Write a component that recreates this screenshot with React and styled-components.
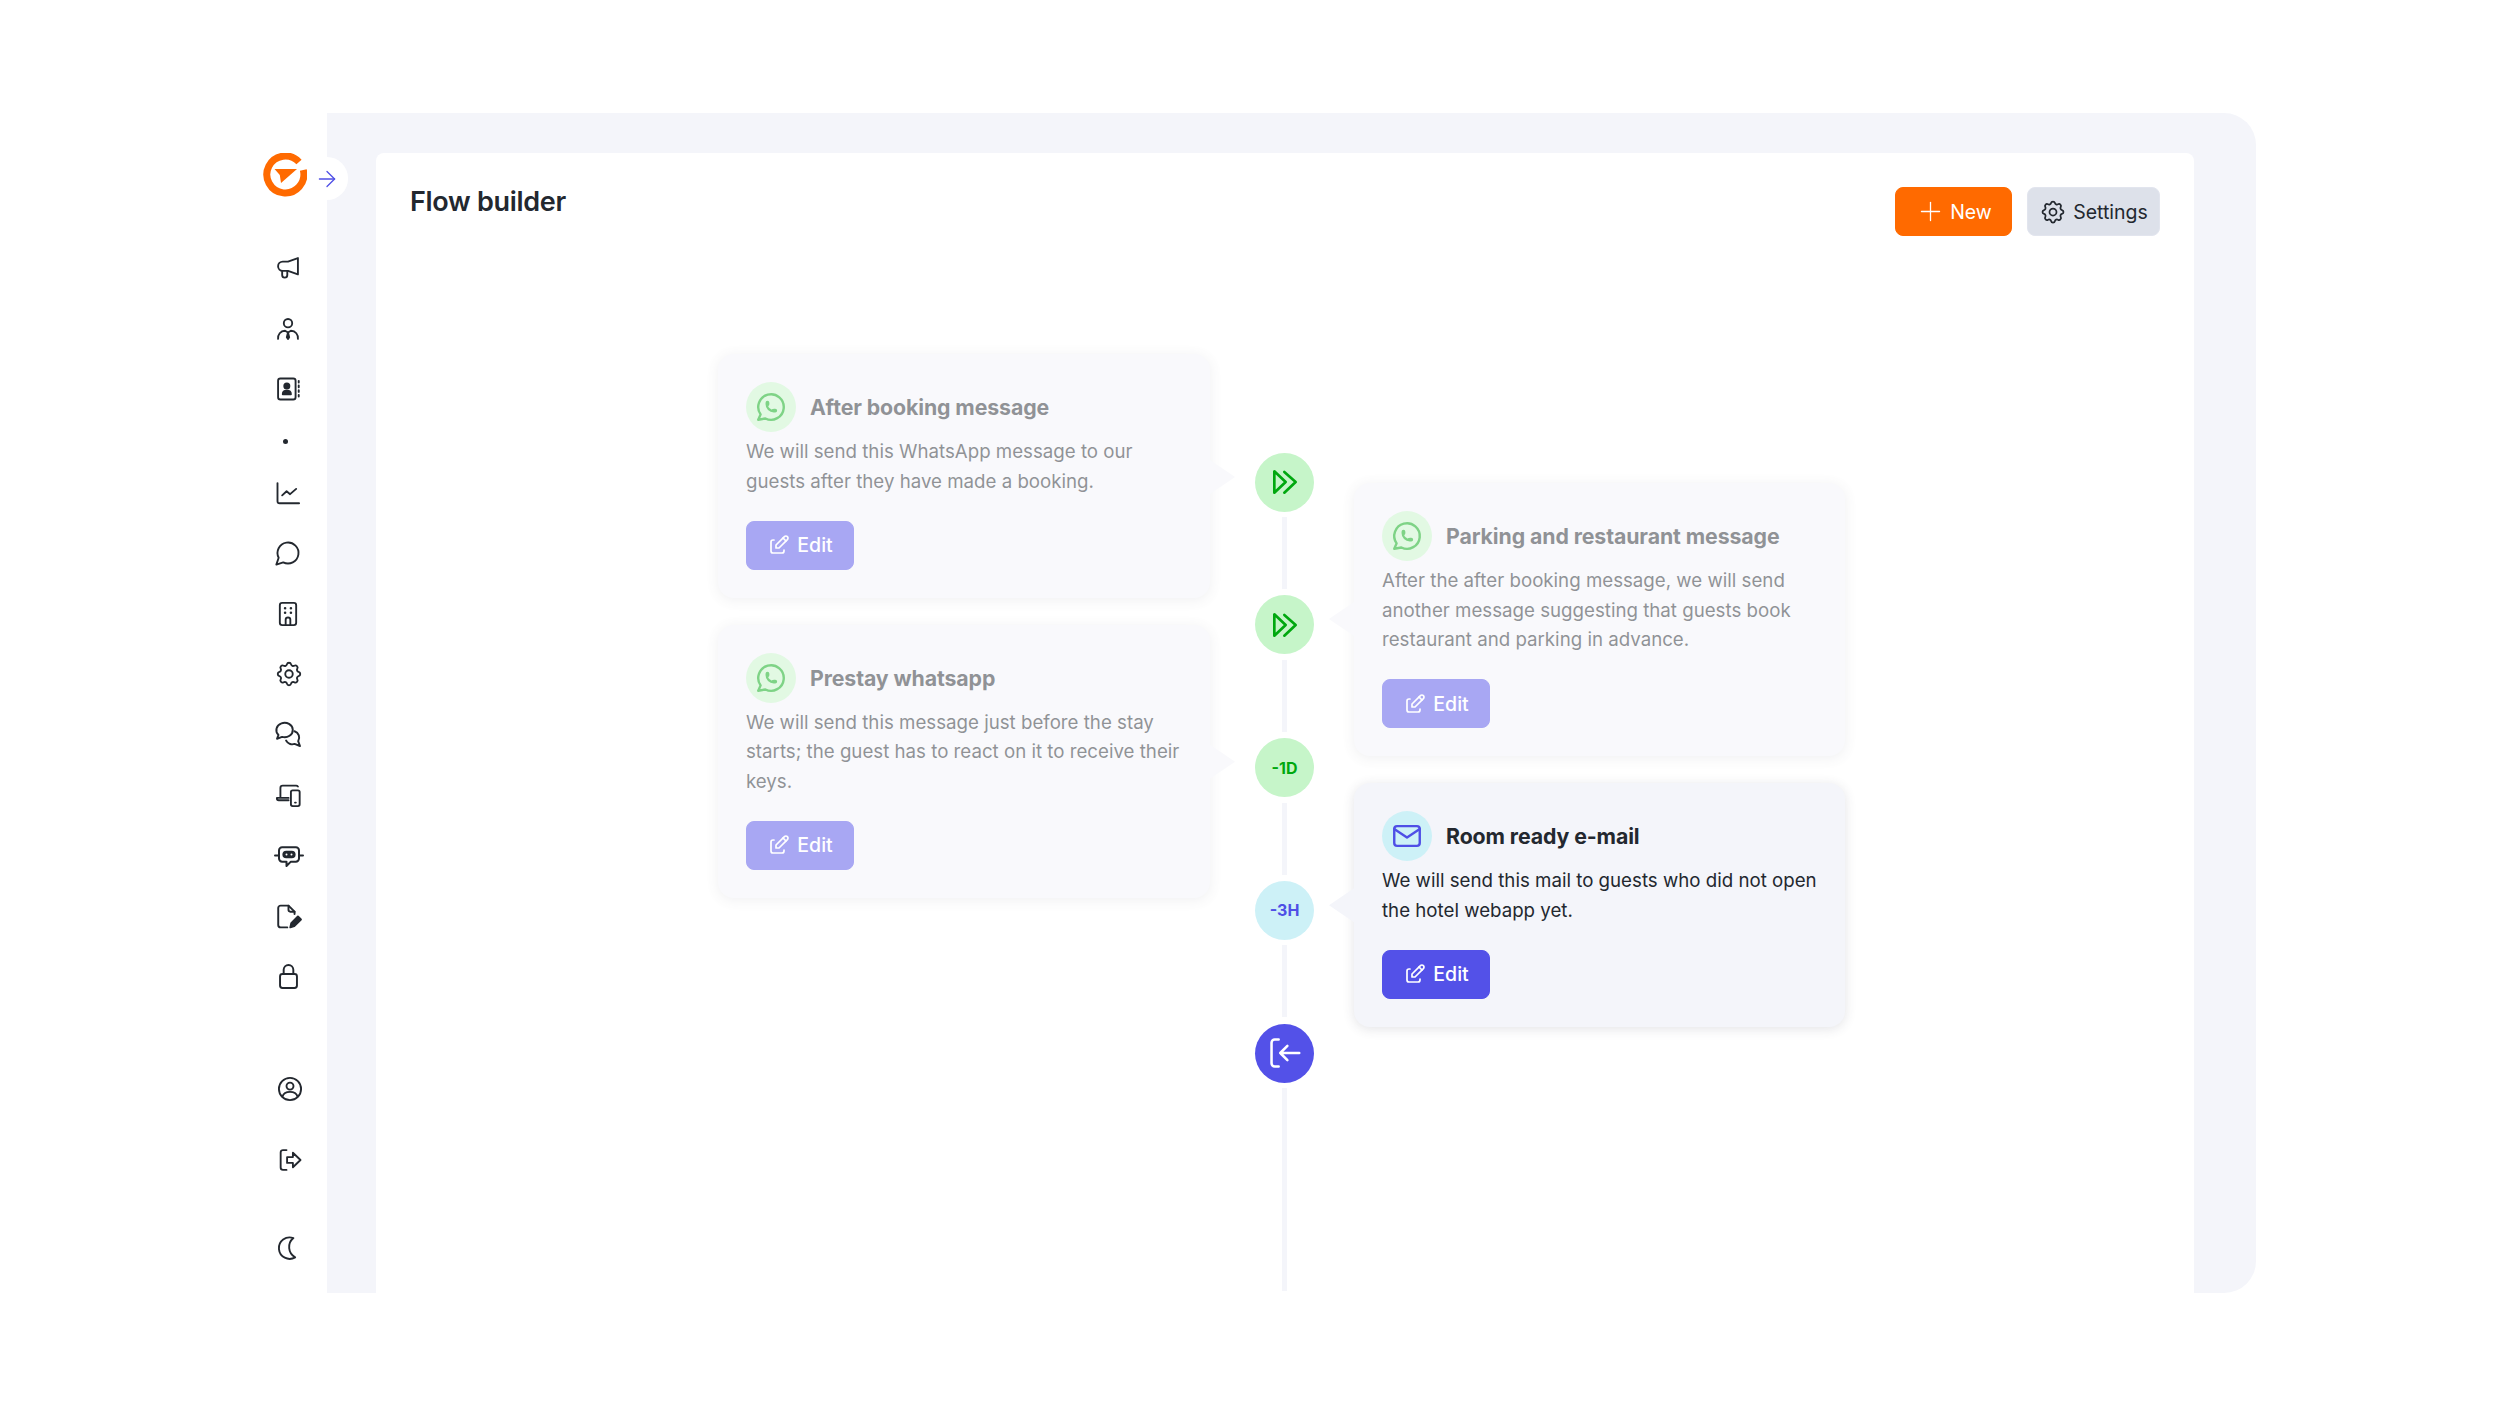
import React from 'react';
import styled, { createGlobalStyle } from 'styled-components';
import { ArrowRight, Plus } from 'lucide-react';
import { TbSettings, TbEdit, TbBrandWhatsapp, TbMail } from 'react-icons/tb';

const Global = createGlobalStyle`
  body {
    margin: 0;
    background: #fff;
    font-family: "Inter", "Liberation Sans", sans-serif;
    color: #23282f;
  }
`;

const Shell = styled.div`
  display: flex;
  width: 2256px;
  height: 1180px;
  margin-top: 113px;
`;

const Sidebar = styled.aside`
  position: relative;
  box-sizing: border-box;
  width: 327px;
  flex: none;
  padding: 40px 0 0 263px;
`;

const Logo = styled.div`
  width: 44px;
  height: 44px;
`;

const Expand = styled.div`
  position: absolute;
  left: 327px;
  top: 44px;
  z-index: 2;
  width: 21px;
  height: 43px;
  background: #fff;
  border-radius: 0 22px 22px 0;
  color: #4f4fe6;
  & svg {
    position: absolute;
    left: -13px;
    top: 8.5px;
  }
`;

const Nav = styled.nav`
  display: flex;
  flex-direction: column;
  margin-top: 40.75px;
`;

const NavItem = styled.div`
  display: flex;
  align-items: center;
  height: 60.5px;
  margin-top: ${p => p.$gap || 0}px;
  margin-left: ${p => p.$shift || 11}px;
  color: #23282f;
`;

const Dot = styled.div`
  width: 5px;
  height: 5px;
  margin: 20px 0 18px 20px;
  border-radius: 50%;
  background: #23282f;
`;

const Panel = styled.main`
  box-sizing: border-box;
  flex: 1;
  padding: 40px 62px 0 49px;
  background: #f4f5fa;
  border-radius: 0 32px 32px 0;
`;

const Board = styled.section`
  box-sizing: border-box;
  height: 100%;
  padding: 34px 34px 0;
  background: #fff;
  border-radius: 8px 8px 0 0;
  overflow: hidden;
`;

const Header = styled.header`
  display: flex;
  justify-content: space-between;
  height: 50px;
`;

const Title = styled.h1`
  margin: 0;
  font-size: 27px;
  line-height: 30px;
  font-weight: 600;
  letter-spacing: -0.3px;
`;

const Actions = styled.div`
  display: flex;
  gap: 15px;
`;

const Button = styled.button`
  display: flex;
  align-items: center;
  justify-content: center;
  gap: ${p => p.$gap || 6}px;
  box-sizing: border-box;
  width: ${p => p.$w}px;
  height: 49px;
  padding: 0;
  border: 1px solid ${p => p.$border || p.$bg};
  border-radius: 8px;
  background: ${p => p.$bg};
  color: ${p => p.$color};
  font: ${p => p.$weight || 500} 19.5px "Inter", sans-serif;
`;

const Flow = styled.div`
  display: grid;
  grid-template-columns: 492px 64px 491px;
  column-gap: 40px;
  margin: 117px 0 0 308px;
`;

const Column = styled.div`
  display: flex;
  flex-direction: column;
  gap: 27px;
  padding-top: ${p => p.$top}px;
`;

const Timeline = styled.div`
  display: flex;
  flex-direction: column;
  align-items: center;
  padding: 98.5px 0 0 5px;
`;

const Node = styled.div`
  display: flex;
  align-items: center;
  justify-content: center;
  width: 59px;
  height: 59px;
  flex: none;
  border-radius: 50%;
  background: ${p => p.$bg};
  color: ${p => p.$color};
  font-size: 16px;
  font-weight: 700;
`;

const Line = styled.div`
  width: 5px;
  height: ${p => p.$h || 72}px;
  margin: 5.5px 0 6.25px;
  flex: none;
  background: #f4f5fa;
`;

const Card = styled.article`
  position: relative;
  box-sizing: border-box;
  padding: 28px;
  background: #f4f5fa;
  border-radius: 16px;
  box-shadow: 0 2px 12px rgba(60, 60, 80, 0.14);
  opacity: ${p => (p.$dim ? 0.5 : 1)};
  &::after {
    content: '';
    position: absolute;
    top: ${p => p.$tail - 17}px;
    ${p => (p.$side === 'right' ? 'left: 100%;' : 'right: 100%;')}
    width: 25px;
    height: 34px;
    background: #f4f5fa;
    clip-path: ${p => (p.$side === 'right'
      ? 'polygon(0 0, 100% 50%, 0 100%)'
      : 'polygon(100% 0, 0 50%, 100% 100%)')};
  }
`;

const CardHead = styled.div`
  display: flex;
  align-items: center;
  gap: 14px;
`;

const Bubble = styled.div`
  display: flex;
  align-items: center;
  justify-content: center;
  width: 50px;
  height: 50px;
  border-radius: 50%;
  background: ${p => p.$bg};
  color: ${p => p.$color};
`;

const CardTitle = styled.h2`
  margin: 0;
  font-size: 21.3px;
  font-weight: 700;
  letter-spacing: -0.1px;
`;

const CardText = styled.p`
  margin: 5px 0 24.5px;
  font-size: 18.7px;
  line-height: 29.6px;
  font-weight: 400;
  white-space: nowrap;
`;

const Svg = ({ children, size = 28 }) => (
  <svg width={size} height={size} viewBox="0 0 24 24" fill="none" stroke="currentColor" strokeWidth="1.6" strokeLinecap="round" strokeLinejoin="round">
    {children}
  </svg>
);

const icons = [
  <Svg><path d="M20.5 3.500v14l-8.500-3H7.500a4 4 0 0 1 0-8H12z" /><path d="M7 14.500V18a2.200 2.200 0 0 0 4.400 0v-3.500" /></Svg>,
  <Svg><circle cx="12" cy="7" r="3.600" /><path d="M3.500 20.500c-.3-3.800 2-6.800 6-7L12 15l2.500-1.500c4 .2 6.300 3.200 6 7" /><path d="M12 15l-1 4 1 1.500 1-1.500z" fill="currentColor" /></Svg>,
  <Svg><rect x="3.500" y="3" width="15" height="18" rx="2" /><circle cx="11" cy="9.500" r="2.200" fill="currentColor" /><path d="M7.500 16.500c0-4 7-4 7 0z" fill="currentColor" /><path d="M21.200 5v1.500M21.200 9v1.500M21.200 13v1.500M21.200 17v1.500" /></Svg>,
  null,
  <Svg><path d="M3 3.500V19a1.800 1.800 0 0 0 1.800 1.800H21.500" /><path d="M7 14l3.800-3.500 3 2.500 5.200-4.500" /></Svg>,
  <Svg><path d="M7.900 20A9 9 0 1 0 4 16.100L2 22Z" /></Svg>,
  <Svg><rect x="5" y="2.500" width="14" height="19" rx="2" /><path d="M9.500 7h.01M14.500 7h.01M9.500 11h.01M14.500 11h.01" strokeWidth="2.200" /><path d="M10 21.500V17a2 2 0 0 1 4 0v4.500" /></Svg>,
  <TbSettings size={30} strokeWidth={1.500} />,
  <Svg size={29}><path d="M2.500 15.500l1.200-3.200A6.800 6 0 1 1 6.700 14z" /><path d="M17 9.300a5.500 5.500 0 0 1 3 8.200l1.500 4-4.500-1.700A6 6 0 0 1 10 17" /></Svg>,
  <Svg><path d="M5.500 13.500V6a2 2 0 0 1 2-2H19a2 2 0 0 1 1.500.700" /><path d="M12.500 16.500H4a1.500 1.500 0 0 1-1.500-1.500v-.500h10" /><rect x="14.500" y="8" width="7.500" height="13.500" rx="1.500" /><path d="M18 18.500h.7" /></Svg>,
  <Svg size={30}>
    <path d="M.8 11.500h3.200M20 11.500h3.200" />
    <path d="M6.500 5h11A2.500 2.500 0 0 1 20 7.500V14a2.500 2.500 0 0 1-2.500 2.500h-4L10 20v-3.500H6.500A2.500 2.500 0 0 1 4 14V7.500A2.500 2.500 0 0 1 6.500 5z" />
    <rect x="7.500" y="8.500" width="9" height="4.500" rx="2.250" fill="currentColor" />
    <circle cx="10" cy="10.750" r=".8" fill="#fff" stroke="none" />
    <circle cx="14" cy="10.750" r=".8" fill="#fff" stroke="none" />
  </Svg>,
  <Svg size={29}><path d="M11 21H5.500a2 2 0 0 1-2-2V5a2 2 0 0 1 2-2H12l5 5v2" /><path d="M12 3v3.500A1.500 1.500 0 0 0 13.500 8H17" /><path d="M13.500 21l.8-3.500 5.500-5.500 2.500 2.500-5.500 5.500z" fill="currentColor" /></Svg>,
  <Svg size={29}><rect x="5" y="10" width="14" height="11.500" rx="2" /><path d="M8 10V6.500a4 4 0 0 1 8 0V10" /></Svg>,
];

const whatsapp = { bg: '#c6f5c9', color: '#00a80f' };
const mail = { bg: '#cdf1f7', color: '#4f4fe6' };

const LeftCards = [
  {
    title: 'After booking message',
    text: <>We will send this WhatsApp message to our<br />guests after they have made a booking.</>,
    tail: 123,
  },
  {
    title: 'Prestay whatsapp',
    text: <>We will send this message just before the stay<br />starts; the guest has to react on it to receive their<br />keys.</>,
    tail: 137,
  },
];

const RightCards = [
  {
    title: 'Parking and restaurant message',
    text: <>After the after booking message, we will send<br />another message suggesting that guests book<br />restaurant and parking in advance.</>,
    tail: 136,
    dim: true,
  },
  {
    title: 'Room ready e-mail',
    text: <>We will send this mail to guests who did not open<br />the hotel webapp yet.</>,
    tail: 122,
    kind: 'mail',
  },
];

const FlowCard = ({ title, text, tail, side, dim, kind }) => (
  <Card $dim={dim} $tail={tail} $side={side}>
    <CardHead>
      {kind === 'mail'
        ? <Bubble $bg={mail.bg} $color={mail.color}><TbMail size={34} strokeWidth={1.700} /></Bubble>
        : <Bubble $bg={whatsapp.bg} $color={whatsapp.color}><TbBrandWhatsapp size={34} strokeWidth={1.700} /></Bubble>}
      <CardTitle>{title}</CardTitle>
    </CardHead>
    <CardText>{text}</CardText>
    <Button $w={108} $bg="#5351e8" $color="#fff">
      <TbEdit size={24} strokeWidth={1.700} /> Edit
    </Button>
  </Card>
);

const Forward = () => (
  <svg width="32" height="32" viewBox="0 0 24 24" fill="none" stroke="currentColor" strokeWidth="2" strokeLinecap="round" strokeLinejoin="round">
    <path d="M4 4v16l8.500-8z" />
    <path d="M11.500 4.500L20 12l-8.500 8" />
  </svg>
);

const App = () => (
  <>
    <Global />
    <Shell>
      <Sidebar>
        <Logo>
          <svg width="44" height="44" viewBox="0 0 44 44" fill="none">
            <path d="M36 9A18.500 18.500 0 1 0 40.300 17" stroke="#ff6a00" strokeWidth="7" />
            <path d="M11.500 16H34L18 30l-1.200-8z" fill="#ff6a00" />
          </svg>
        </Logo>
        <Expand><ArrowRight size={26} strokeWidth={1.200} /></Expand>
        <Nav>
          {icons.map((icon, i) => (icon
            ? <NavItem key={i}>{icon}</NavItem>
            : <Dot key={i} />))}
          <NavItem $gap={51.5} $shift={13}>
            <Svg><circle cx="12" cy="12" r="9.500" /><circle cx="12" cy="9.500" r="3" /><path d="M5.500 18.500c1-3 3.500-4 6.500-4s5.500 1 6.500 4" /></Svg>
          </NavItem>
          <NavItem $gap={10.5} $shift={13}>
            <Svg><path d="M9 3.500H6a2 2 0 0 0-2 2v13a2 2 0 0 0 2 2h3" /><path d="M9.500 9.500h5V5.800L21 12l-6.500 6.200v-3.700h-5z" /></Svg>
          </NavItem>
          <NavItem $gap={27.5} $shift={10}>
            <Svg><path d="M17.500 3.500A9.200 9.200 0 1 0 19 20a10 10 0 0 1-1.500-16.500z" /></Svg>
          </NavItem>
        </Nav>
      </Sidebar>
      <Panel>
        <Board>
          <Header>
            <Title>Flow builder</Title>
            <Actions>
              <Button $w={117} $bg="#ff6a00" $color="#fff" $gap={4} $weight={400}>
                <Plus size={31} strokeWidth={1} /> New
              </Button>
              <Button $w={133} $bg="#dde1ea" $border="#e2e5ee" $color="#23282f" $weight={400}>
                <TbSettings size={28} strokeWidth={1.500} /> Settings
              </Button>
            </Actions>
          </Header>
          <Flow>
            <Column $top={0}>
              {LeftCards.map(c => <FlowCard key={c.title} {...c} side="right" dim />)}
            </Column>
            <Timeline>
              <Node $bg={whatsapp.bg} $color={whatsapp.color}><Forward /></Node>
              <Line />
              <Node $bg={whatsapp.bg} $color={whatsapp.color}><Forward /></Node>
              <Line />
              <Node $bg={whatsapp.bg} $color={whatsapp.color}>-1D</Node>
              <Line />
              <Node $bg={mail.bg} $color={mail.color}>-3H</Node>
              <Line />
              <Node $bg="#5351e8" $color="#fff">
                <svg width="38" height="38" viewBox="0 0 24 24" fill="none" stroke="currentColor" strokeWidth="1.600" strokeLinecap="round" strokeLinejoin="round">
                  <path d="M8 3.500H5.500a2 2 0 0 0-2 2v13a2 2 0 0 0 2 2H8" />
                  <path d="M21 12H9M13.500 7.500L9 12l4.500 4.500" />
                </svg>
              </Node>
              <Line $h={203} />
            </Timeline>
            <Column $top={129}>
              {RightCards.map(c => <FlowCard key={c.title} {...c} side="left" />)}
            </Column>
          </Flow>
        </Board>
      </Panel>
    </Shell>
  </>
);

export default App;
